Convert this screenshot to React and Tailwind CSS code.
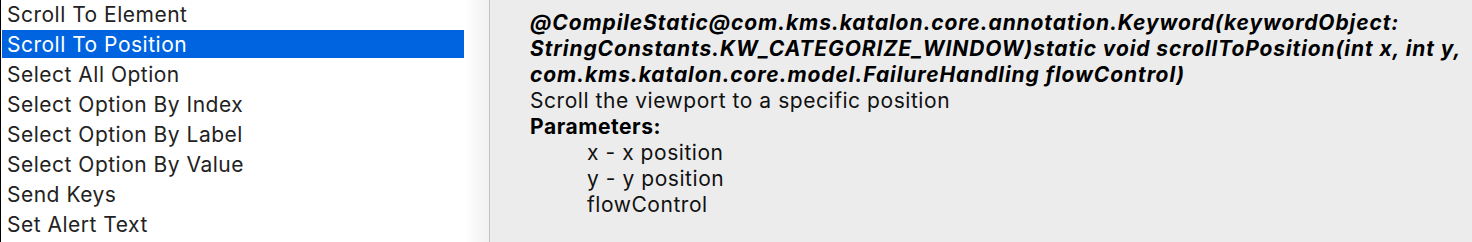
import React from "react";

const items = [
  "Scroll To Element",
  "Scroll To Position",
  "Select All Option",
  "Select Option By Index",
  "Select Option By Label",
  "Select Option By Value",
  "Send Keys",
  "Set Alert Text",
];

const font = { fontFamily: "Inter, 'Liberation Sans', sans-serif" };

const KeywordList = () => (
  <div className="flex h-full w-[490px] shrink-0 border-l border-r border-l-black border-r-[#c4c4c4] bg-white">
    <div className="w-[463px] overflow-hidden">
      {items.map((name, i) =>
        i === 1 ? (
          <div key={name} className="h-[30px] pl-[1px]">
            <div className="h-[28px] bg-[#0064e1] pl-[5px] text-[21px] leading-[30px] tracking-[0.5px] text-white">{name}</div>
          </div>
        ) : (
          <div key={name} className="h-[30px] pl-[6px] text-[21px] leading-[30px] tracking-[0.5px] text-[#222]">
            {name}
          </div>
        )
      )}
    </div>
    <div className="flex-1 bg-gradient-to-r from-white to-[#f1f1f1]" />
  </div>
);

const KeywordDoc = () => (
  <div className="flex-1 bg-[#ececec] pl-[40px] pt-[10px] text-[21px] leading-[26px] tracking-[0.55px] text-[#111]">
    <div className="font-bold italic tracking-[0.9px] text-black">
      <div>@CompileStatic@com.kms.katalon.core.annotation.Keyword(keywordObject:</div>
      <div>StringConstants.KW_CATEGORIZE_WINDOW)static void scrollToPosition(int x, int y,</div>
      <div>com.kms.katalon.core.model.FailureHandling flowControl)</div>
    </div>
    <div>Scroll the viewport to a specific position</div>
    <div className="font-bold text-black">Parameters:</div>
    <div className="pl-[57px]">
      <div>x - x position</div>
      <div>y - y position</div>
      <div>flowControl</div>
    </div>
  </div>
);

export default function App() {
  return (
    <div className="flex h-[242px] w-[1472px] overflow-hidden" style={font}>
      <KeywordList />
      <KeywordDoc />
    </div>
  );
}
